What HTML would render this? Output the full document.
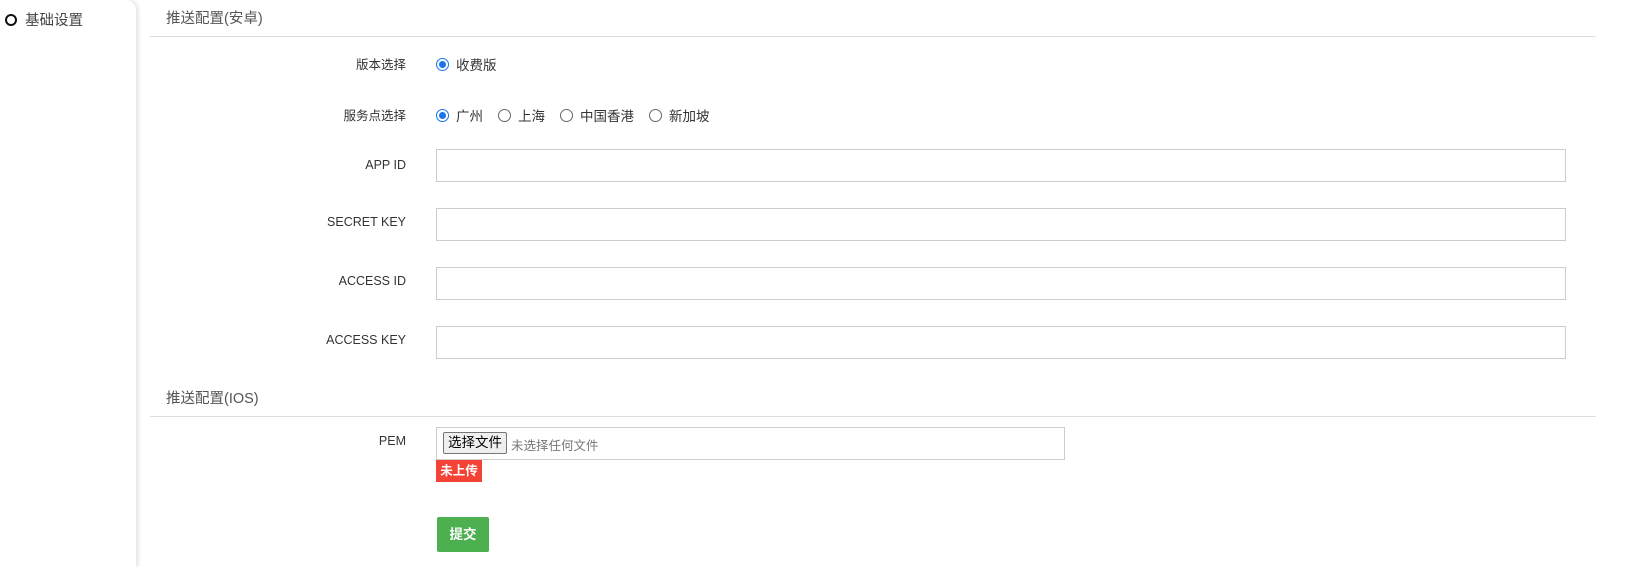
<!DOCTYPE html>
<html><head><meta charset="utf-8"><style>
*{box-sizing:border-box;margin:0;padding:0}
body{width:1625px;height:567px;background:#fff;font-family:"Liberation Sans","Noto Sans CJK SC",sans-serif;color:#333;position:relative;overflow:hidden}
.side{position:absolute;left:0;top:0;width:136px;height:567px;background:#fff;box-shadow:2px 0 5px rgba(0,0,0,.12);border-top-right-radius:10px}
.side .it{position:absolute;left:5px;top:9px;font-size:14.5px;color:#444}
.side .it i{display:inline-block;width:12px;height:12px;border:2px solid #111;border-radius:50%;margin-right:8px;vertical-align:-1px}
.h{position:absolute;left:166px;font-size:14.5px;color:#555}
.line{position:absolute;left:150px;width:1446px;height:1px;background:#ddd}
.lab{position:absolute;right:1219px;font-size:12.5px;color:#333;text-align:right}
.inp{position:absolute;left:436px;width:1130px;height:33px;border:1px solid #ccc;background:#fff}
.rad{position:absolute;left:436px;font-size:13.5px;color:#333;display:flex;align-items:center}
.r{display:inline-block;width:13px;height:13px;border:1px solid #666;border-radius:50%;margin-right:7px;position:relative}
.r.on{border:1px solid #1a73e8}
.r.on:after{content:"";position:absolute;left:2px;top:2px;width:7px;height:7px;border-radius:50%;background:#1a73e8}
.rad span.t{margin-right:15px}
</style></head><body>
<div class="side"><div class="it"><i></i>基础设置</div></div>
<div class="h" style="top:7px">推送配置(安卓)</div>
<div class="line" style="top:36px"></div>
<div class="lab" style="top:54px">版本选择</div>
<div class="rad" style="top:54px"><span class="r on"></span><span class="t">收费版</span></div>
<div class="lab" style="top:105px">服务点选择</div>
<div class="rad" style="top:105px"><span class="r on"></span><span class="t">广州</span><span class="r"></span><span class="t">上海</span><span class="r"></span><span class="t">中国香港</span><span class="r"></span><span class="t">新加坡</span></div>
<div class="lab" style="top:158px">APP ID</div><div class="inp" style="top:149px"></div>
<div class="lab" style="top:215px">SECRET KEY</div><div class="inp" style="top:208px"></div>
<div class="lab" style="top:274px">ACCESS ID</div><div class="inp" style="top:267px"></div>
<div class="lab" style="top:333px">ACCESS KEY</div><div class="inp" style="top:326px"></div>
<div class="h" style="top:387px">推送配置(IOS)</div>
<div class="line" style="top:416px"></div>
<div class="lab" style="top:434px">PEM</div>
<div class="inp" style="top:427px;width:629px;height:33px"></div>
<div style="position:absolute;left:443px;top:432px;width:64px;height:22px;border:1px solid #767676;border-radius:2px;background:#efefef;font-size:13.5px;color:#000;text-align:center;line-height:20px">选择文件</div>
<div style="position:absolute;left:511px;top:435px;font-size:12.5px;color:#777">未选择任何文件</div>
<div style="position:absolute;left:436px;top:460px;width:46px;height:22px;background:#f44336;color:#fff;font-size:12.5px;font-weight:bold;text-align:center;line-height:22px">未上传</div>
<div style="position:absolute;left:437px;top:517px;width:52px;height:35px;background:#4caf50;color:#fff;font-size:13.5px;font-weight:bold;text-align:center;line-height:35px;border-radius:2px">提交</div>
</body></html>
